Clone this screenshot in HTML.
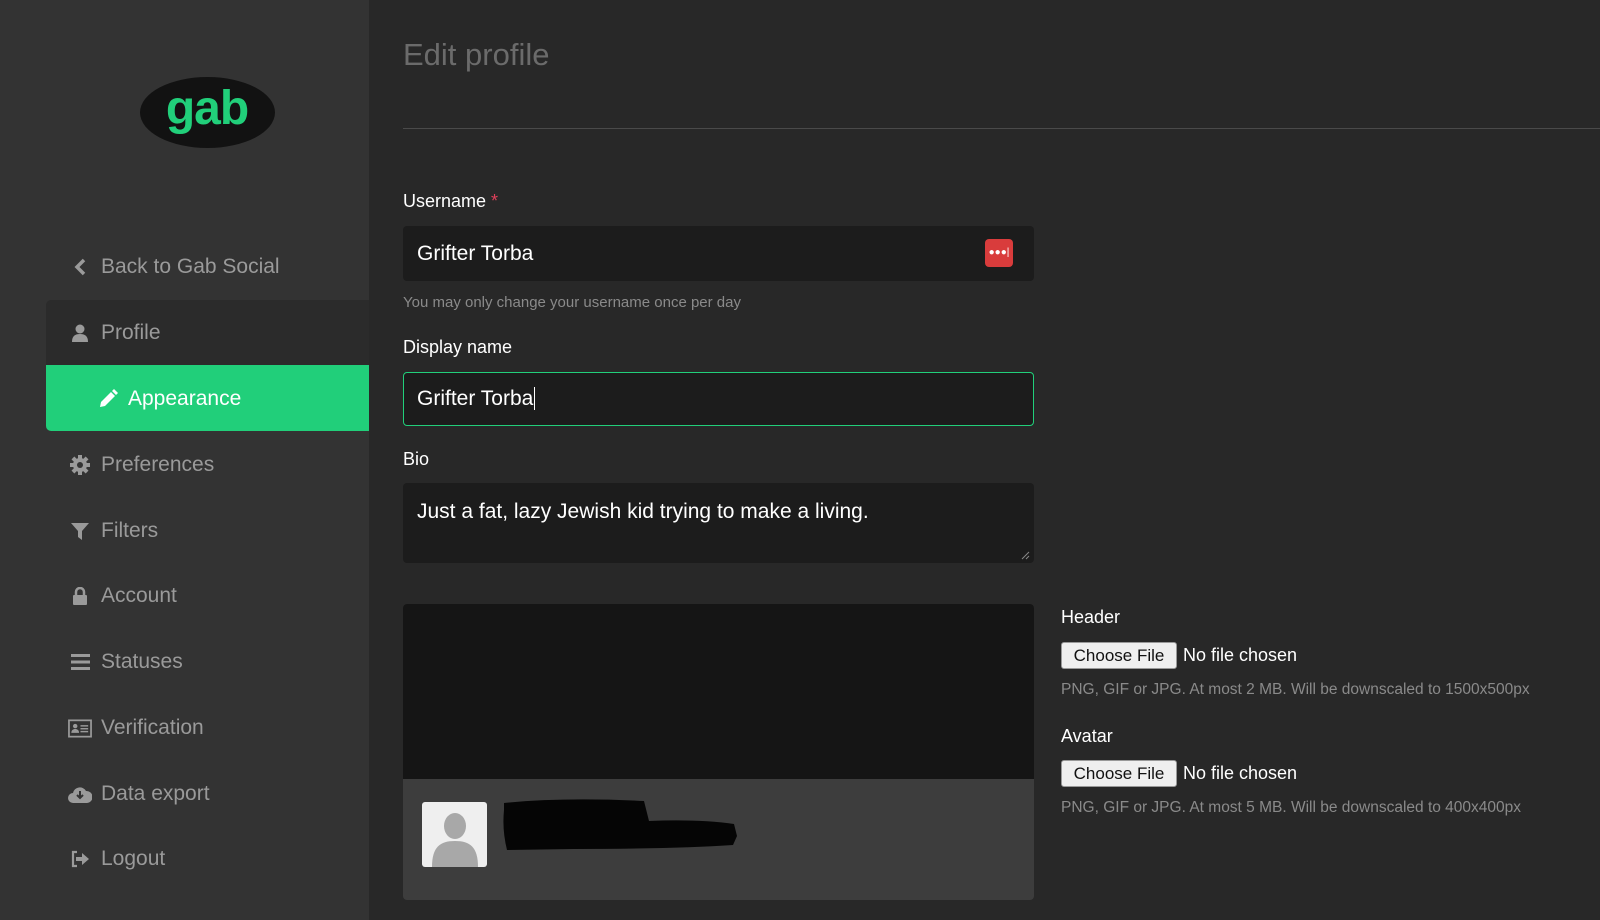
<!DOCTYPE html>
<html><head><meta charset="utf-8"><style>
*{margin:0;padding:0;box-sizing:border-box}
body{width:1600px;height:920px;background:#282828;font-family:"Liberation Sans",sans-serif;position:relative;overflow:hidden}
.sb{position:absolute;left:0;top:0;width:369px;height:920px;background:#333}
.it{position:absolute;left:46px;width:323px;height:66px;color:#9a9a9a;font-size:21px;line-height:66px}
.it .ic{position:absolute;left:22px;top:0;width:24px;height:66px;display:flex;align-items:center;justify-content:center}
.it .tx{position:absolute;left:55px}
.abs{position:absolute}
.lbl{position:absolute;left:403px;color:#fff;font-size:18px}
.inp{position:absolute;left:403px;width:631px;background:#1c1c1c;border-radius:4px;color:#fff;font-size:21px;padding-left:14px}
.hint{position:absolute;color:#8a8a8a;font-size:15px}
.btn{position:absolute;left:1061px;width:116px;height:27px;background:#efefef;border:1px solid #999;border-radius:3px;color:#111;font-size:17px;text-align:center;line-height:25px}
.nf{position:absolute;left:1183px;color:#fff;font-size:18px}
</style></head><body>
<div class="sb">
<svg class="abs" style="left:140px;top:77px" width="135" height="71"><ellipse cx="67.5" cy="35.5" rx="67.5" ry="35.5" fill="#121212"/><text x="67" y="47" text-anchor="middle" font-family="Liberation Sans" font-weight="bold" font-size="48" fill="#21cf7a" letter-spacing="-1">gab</text></svg>
<div class="it" style="top:234px"><span class="ic"><svg width="14" height="18" viewBox="0 0 14 18"><path d="M11 2L4 9l7 7" stroke="#9a9a9a" stroke-width="3.5" fill="none"/></svg></span><span class="tx">Back to Gab Social</span></div>
<div class="abs" style="left:46px;top:300px;width:323px;height:65px;background:#2b2b2b;border-radius:5px 0 0 0"></div>
<div class="it" style="top:300px"><span class="ic"><svg width="16" height="19" viewBox="0 0 16 19"><circle cx="8" cy="5" r="4.5" fill="#9a9a9a"/><path d="M0 18c0-6 3-8 8-8s8 2 8 8z" fill="#9a9a9a"/></svg></span><span class="tx">Profile</span></div>
<div class="abs" style="left:46px;top:365px;width:323px;height:66px;background:#21cf7a;border-radius:0 0 0 5px"></div>
<div class="it" style="top:366px;color:#fff"><span class="ic" style="left:50px"><svg width="20" height="20" viewBox="0 0 20 20"><path d="M2 18l1-5L13 3l4 4L7 17z" fill="#fff"/><path d="M14 2l2-2 4 4-2 2z" fill="#fff"/></svg></span><span class="tx" style="left:82px">Appearance</span></div>
<div class="it" style="top:432px"><span class="ic"><svg width="20" height="20" viewBox="0 0 20 20"><g fill="#9a9a9a"><circle cx="10" cy="10" r="7"/><rect x="8" y="0" width="4" height="20"/><rect x="0" y="8" width="20" height="4"/><rect x="8" y="0" width="4" height="20" transform="rotate(45 10 10)"/><rect x="8" y="0" width="4" height="20" transform="rotate(-45 10 10)"/></g><circle cx="10" cy="10" r="3" fill="#333"/></svg></span><span class="tx">Preferences</span></div>
<div class="it" style="top:498px"><span class="ic"><svg width="18" height="18" viewBox="0 0 18 18"><path d="M0 1h18l-7 8v9l-4-3V9z" fill="#9a9a9a"/></svg></span><span class="tx">Filters</span></div>
<div class="it" style="top:563px"><span class="ic"><svg width="16" height="18" viewBox="0 0 16 18"><path d="M4 8V5a4 4 0 0 1 8 0v3" stroke="#9a9a9a" stroke-width="2.5" fill="none"/><rect x="1" y="8" width="14" height="10" rx="1" fill="#9a9a9a"/></svg></span><span class="tx">Account</span></div>
<div class="it" style="top:629px"><span class="ic"><svg width="19" height="16" viewBox="0 0 19 16"><g fill="#9a9a9a"><rect y="0" width="19" height="3"/><rect y="6.5" width="19" height="3"/><rect y="13" width="19" height="3"/></g></svg></span><span class="tx">Statuses</span></div>
<div class="it" style="top:695px"><span class="ic"><svg width="25" height="19" viewBox="0 0 25 19"><rect x="1" y="1" width="23" height="17" fill="none" stroke="#9a9a9a" stroke-width="1.8"/><circle cx="7.5" cy="7" r="2.3" fill="#9a9a9a"/><path d="M3.5 14c0-3 2-4 4-4s4 1 4 4z" fill="#9a9a9a"/><rect x="13" y="6" width="8" height="1.5" fill="#9a9a9a"/><rect x="13" y="9" width="8" height="1.5" fill="#9a9a9a"/><rect x="13" y="12" width="8" height="1.5" fill="#9a9a9a"/></svg></span><span class="tx">Verification</span></div>
<div class="it" style="top:761px"><span class="ic"><svg width="24" height="18" viewBox="0 0 24 18"><path d="M5 18a5 5 0 0 1 0-10 7 7 0 0 1 13-2 6 6 0 0 1 1 12z" fill="#9a9a9a"/><path d="M12 6v6M9 10l3 3 3-3" stroke="#333" stroke-width="2" fill="none"/></svg></span><span class="tx">Data export</span></div>
<div class="it" style="top:826px"><span class="ic"><svg width="20" height="18" viewBox="0 0 20 18"><path d="M7 2H3v14h4" stroke="#9a9a9a" stroke-width="2.2" fill="none"/><path d="M6 7h6V3l7 6-7 6v-4H6z" fill="#9a9a9a"/></svg></span><span class="tx">Logout</span></div>
</div>

<div class="abs" style="left:403px;top:37px;color:#6b6b6b;font-size:31px">Edit profile</div>
<div class="abs" style="left:403px;top:128px;width:1197px;height:1px;background:#4a4a4a"></div>

<div class="lbl" style="top:191px">Username <span style="color:#df405a">*</span></div>
<div class="inp" style="top:226px;height:55px;line-height:55px">Grifter Torba</div>
<div class="abs" style="left:985px;top:239px;width:28px;height:28px;background:#d93c3c;border-radius:4px;color:#fff;font-size:10px;line-height:28px;text-align:center;letter-spacing:0">●●●|</div>
<div class="hint" style="left:403px;top:294px">You may only change your username once per day</div>

<div class="lbl" style="top:337px">Display name</div>
<div class="inp" style="top:372px;height:54px;line-height:52px;border:1px solid #21cf7a;padding-left:13px">Grifter Torba<span style="border-left:1.5px solid #fff;margin-left:1px"></span></div>

<div class="lbl" style="top:449px">Bio</div>
<div class="inp" style="top:483px;height:80px;padding-top:17px;line-height:24px">Just a fat, lazy Jewish kid trying to make a living.</div>
<svg class="abs" style="left:1020px;top:550px" width="10" height="10"><path d="M9 2L2 9M9 6L6 9" stroke="#888" stroke-width="1"/></svg>

<div class="abs" style="left:403px;top:604px;width:631px;height:296px;background:#3d3d3d;border-radius:4px;overflow:hidden"><div style="height:175px;background:#151515"></div></div>
<div class="abs" style="left:422px;top:802px;width:65px;height:65px;background:#efefef;border-radius:3px;overflow:hidden"><svg width="65" height="65"><ellipse cx="33" cy="24" rx="11" ry="13" fill="#a8a8a8"/><path d="M10 65c0-20 8-26 23-26s23 6 23 26z" fill="#a8a8a8"/></svg></div>
<svg class="abs" style="left:500px;top:797px" width="240" height="60"><path d="M4 6q60-6 140-2l5 20q50-2 85 3l3 12-4 9q-60 4-160 4l-66 1q-5-20-3-40z" fill="#050505"/></svg>

<div class="lbl" style="left:1061px;top:607px">Header</div>
<div class="btn" style="top:642px">Choose File</div>
<div class="nf" style="top:645px">No file chosen</div>
<div class="hint" style="left:1061px;top:681px;font-size:15.5px">PNG, GIF or JPG. At most 2 MB. Will be downscaled to 1500x500px</div>
<div class="lbl" style="left:1061px;top:726px">Avatar</div>
<div class="btn" style="top:760px">Choose File</div>
<div class="nf" style="top:763px">No file chosen</div>
<div class="hint" style="left:1061px;top:799px;font-size:15.5px">PNG, GIF or JPG. At most 5 MB. Will be downscaled to 400x400px</div>
</body></html>
